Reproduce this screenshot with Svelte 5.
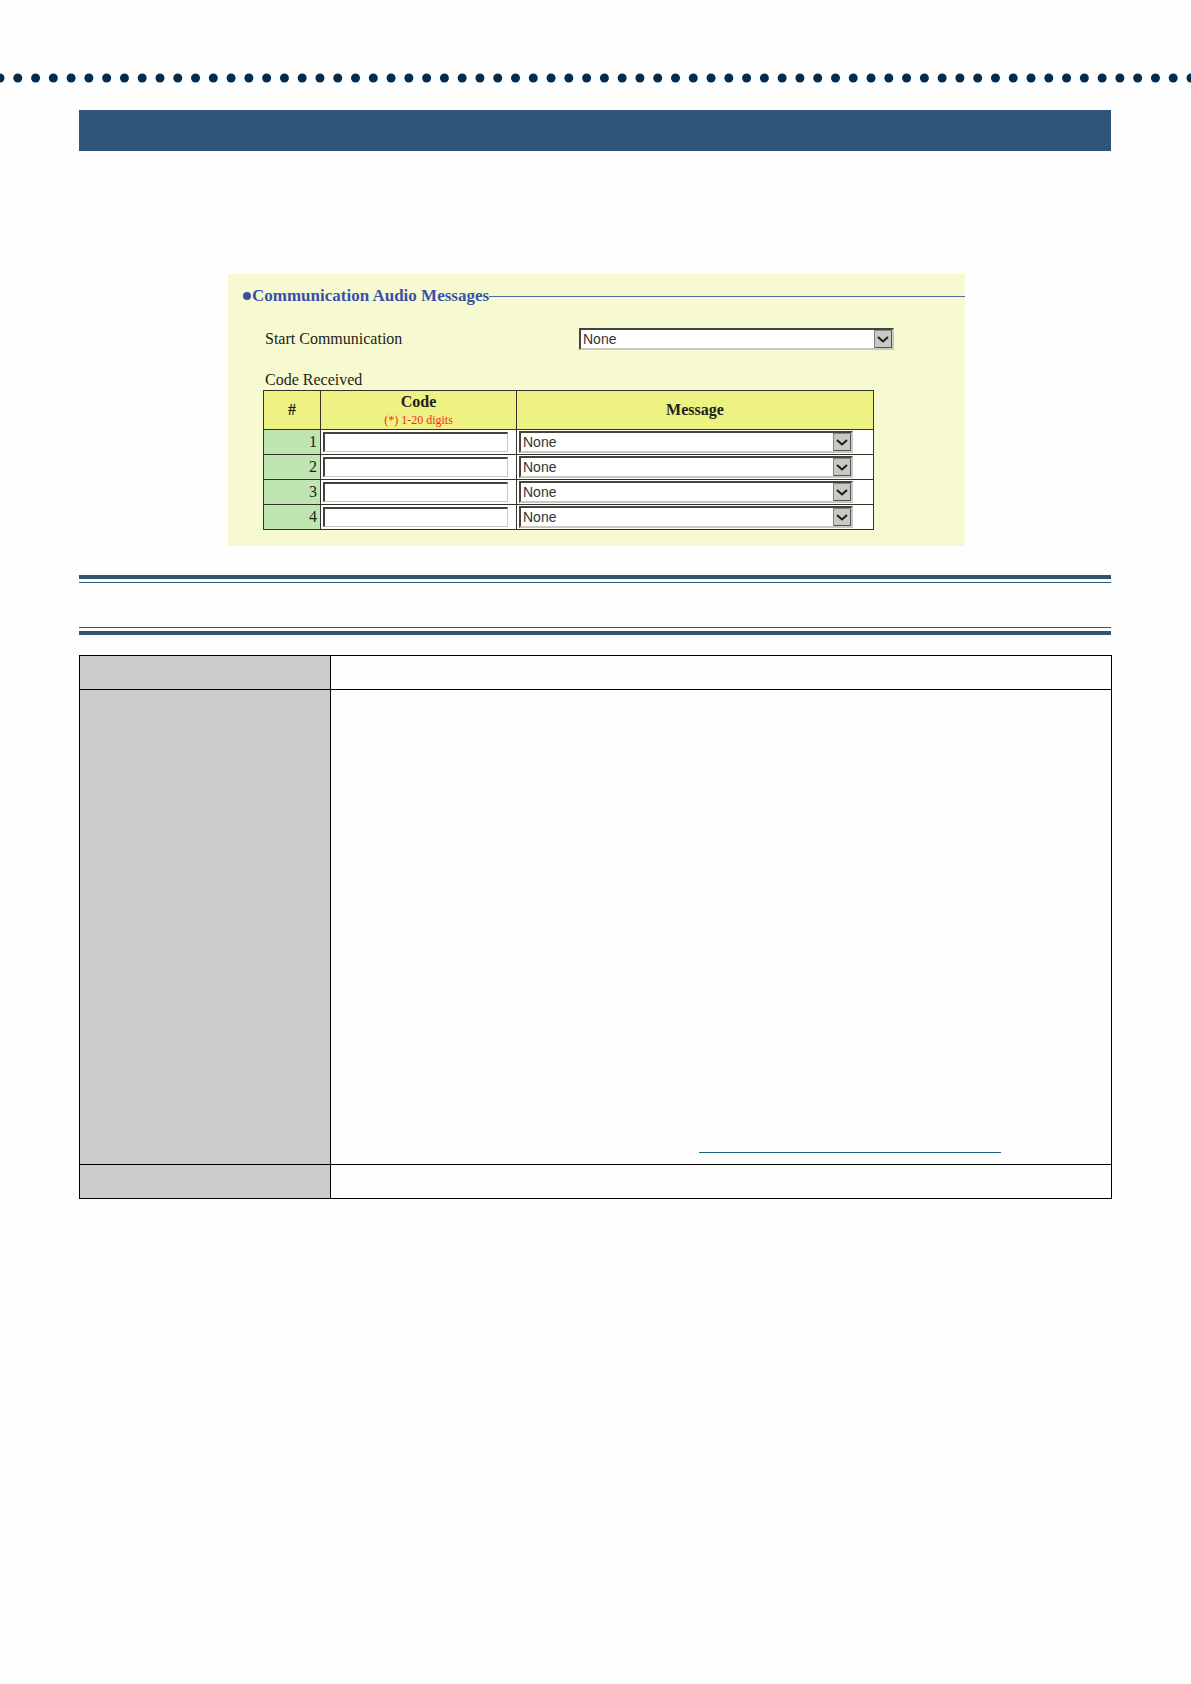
<script>
  const dotGaps = 67;
  const dots = Array.from({ length: dotGaps + 1 }, (_, i) => `${(i * 100) / dotGaps}%`);

  let start = $state('None');
  let rows = $state([1, 2, 3, 4].map((id) => ({ id, code: '', message: 'None' })));
</script>

{#snippet arrow()}
  <svg class="arrow" viewBox="0 0 18 18" aria-hidden="true">
    <rect x="0.5" y="0.5" width="17" height="17" fill="#c9c9c3" stroke="#85857f" />
    <path d="M17.5 1V17.5H1" fill="none" stroke="#55554f" />
    <path d="M4 7l5 4.5 5-4.5" fill="none" stroke="#1c1c1c" stroke-width="2" />
  </svg>
{/snippet}

<div class="page">
  <svg class="dots" aria-hidden="true">
    {#each dots as cx}
      <circle {cx} cy="5" r="4.5" />
    {/each}
  </svg>

  <main>
    <div class="banner"></div>

    <section class="panel">
      <h2><span class="bullet"></span><span>Communication Audio Messages</span></h2>

      <div class="field">
        <label for="start">Start Communication</label>
        <div class="select">
          <select id="start" bind:value={start}>
            <option>None</option>
          </select>
          {@render arrow()}
        </div>
      </div>

      <table class="codes">
        <caption>Code Received</caption>
        <colgroup>
          <col class="num-col" />
          <col class="code-col" />
          <col />
        </colgroup>
        <thead>
          <tr>
            <th scope="col">#</th>
            <th scope="col">Code<span class="hint">(*) 1-20 digits</span></th>
            <th scope="col">Message</th>
          </tr>
        </thead>
        <tbody>
          {#each rows as row (row.id)}
            <tr>
              <th scope="row">{row.id}</th>
              <td><input type="text" maxlength="20" aria-label="Code {row.id}" bind:value={row.code} /></td>
              <td class="message">
                <div class="select">
                  <select aria-label="Message {row.id}" bind:value={row.message}>
                    <option>None</option>
                  </select>
                  {@render arrow()}
                </div>
              </td>
            </tr>
          {/each}
        </tbody>
      </table>
    </section>

    <div class="rules"></div>

    <table class="details">
      <tbody>
        <tr><th></th><td></td></tr>
        <tr class="tall">
          <th></th>
          <td><a href="#details" aria-label="Details"></a></td>
        </tr>
        <tr><th></th><td></td></tr>
      </tbody>
    </table>
  </main>
</div>

<style>
  :global(body) {
    margin: 0;
    background: #fefefe;
  }

  .page {
    box-sizing: border-box;
    min-height: 100vh;
    padding-top: 73px;
    color: #22221c;
    font: 16px/20px 'Liberation Serif', serif;
  }

  .dots {
    display: block;
    width: 100%;
    height: 10px;
    fill: #042c4e;
  }

  main {
    padding: 27px 80px 0 79px;
  }

  .banner {
    height: 41px;
    background: #2f567a;
  }

  .panel {
    margin: 123px 146px 0 149px;
    padding: 12px 0 16px;
    background: #f7fad0;
  }

  h2 {
    display: flex;
    align-items: center;
    margin: 0;
    padding-left: 15px;
    color: #3950a8;
    font-size: 17px;
    line-height: 20px;
  }

  h2::after {
    content: '';
    flex: 1;
    height: 1px;
    background: #4a6fa5;
  }

  .bullet {
    width: 8px;
    height: 8px;
    margin-right: 1px;
    border-radius: 50%;
    background: currentColor;
  }

  .field {
    display: grid;
    grid-template-columns: 314px 1fr;
    align-items: center;
    margin: 22px 71px 0 37px;
  }

  .select {
    display: grid;
    align-items: center;
  }

  .select > :global(*) {
    grid-area: 1 / 1;
  }

  select,
  input {
    box-sizing: border-box;
    appearance: none;
    display: block;
    width: 100%;
    margin: 0;
    border: 2px solid;
    border-color: #44443f #c8c8c4 #c8c8c4 #44443f;
    border-radius: 0;
    background: #fff;
    color: #333;
    font: 14px/16px 'Liberation Sans', sans-serif;
  }

  select {
    height: 22px;
    padding: 0 20px 0 2px;
  }

  .arrow {
    justify-self: end;
    width: 18px;
    height: 18px;
    margin-right: 2px;
    pointer-events: none;
  }

  .codes {
    width: calc(100% - 126px);
    margin: 20px 0 0 35px;
    border-collapse: collapse;
    table-layout: fixed;
  }

  caption {
    padding-left: 2px;
    text-align: left;
  }

  .num-col {
    width: 57px;
  }

  .code-col {
    width: 196px;
  }

  .codes th,
  .codes td {
    border: 1px solid #33332c;
  }

  .codes thead th {
    height: 38px;
    padding: 0;
    background: #eef283;
  }

  .hint {
    display: block;
    color: #f52a18;
    font-size: 12px;
    font-weight: 400;
    line-height: 16px;
  }

  .codes tbody th {
    padding: 0 3px 0 0;
    background: #bfe6b2;
    font-weight: 400;
    text-align: right;
  }

  .codes td {
    height: 24px;
    padding: 0 8px 0 2px;
    background: #fff;
  }

  .codes td.message {
    padding-right: 20px;
  }

  input {
    height: 20px;
    border-width: 2px 1px 1px 2px;
  }

  .rules {
    height: 45px;
    margin-top: 29px;
    border: solid #2f5574;
    border-width: 4px 0;
    padding: 3px 0 4px;
    background:
      linear-gradient(#2f5574, #2f5574) 0 3px / 100% 1px no-repeat,
      linear-gradient(#2f5574, #2f5574) 0 48px / 100% 1px no-repeat;
  }

  .details {
    width: calc(100% + 1px);
    margin-top: 20px;
    border-collapse: collapse;
    table-layout: fixed;
  }

  .details th,
  .details td {
    height: 33px;
    padding: 0;
    border: 1px solid #000;
  }

  .details th {
    width: 250px;
    background: #ccc;
  }

  .details .tall td {
    height: 474px;
    vertical-align: bottom;
  }

  .details a {
    display: block;
    height: 20px;
    margin: 0 110px 11px 368px;
    border-bottom: 1px solid #1c5f78;
  }
</style>
